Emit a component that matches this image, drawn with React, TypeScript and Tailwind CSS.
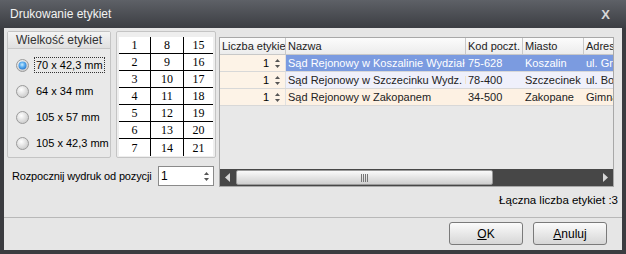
import React from "react";

const F = { fontFamily: '"Liberation Sans", Arial, sans-serif' };

function Radio({ checked }: { checked?: boolean }) {
  return (
    <svg width="13" height="13" viewBox="0 0 13 13" className="shrink-0">
      <defs>
        <radialGradient id="rg1" cx="0.4" cy="0.35" r="0.7">
          <stop offset="0" stopColor="#ffffff" />
          <stop offset="1" stopColor="#c8c8c8" />
        </radialGradient>
        <radialGradient id="rg2" cx="0.45" cy="0.4" r="0.6">
          <stop offset="0" stopColor="#c8ecff" />
          <stop offset="0.5" stopColor="#5fb0f0" />
          <stop offset="1" stopColor="#2a7bd0" />
        </radialGradient>
      </defs>
      <circle cx="6.5" cy="6.5" r="6" fill="url(#rg1)" stroke="#9a9a9a" strokeWidth="1" />
      {checked && <circle cx="6.5" cy="6.5" r="4" fill="url(#rg2)" />}
    </svg>
  );
}

function Spin() {
  return (
    <svg width="7" height="11" viewBox="0 0 7 11" className="shrink-0">
      <path d="M3.5 1 L6 4 L1 4 Z" fill="#555" />
      <path d="M3.5 10 L6 7 L1 7 Z" fill="#555" />
    </svg>
  );
}

const grid = [
  [1, 8, 15],
  [2, 9, 16],
  [3, 10, 17],
  [4, 11, 18],
  [5, 12, 19],
  [6, 13, 20],
  [7, 14, 21],
];

const rows = [
  { sel: true, bg: "bg-[#fdf3e7]", n: "Sąd Rejonowy w Koszalinie Wydział K", k: "75-628", m: "Koszalin", a: "ul. Gro" },
  { sel: false, bg: "bg-[#eff0fb]", n: "Sąd Rejonowy w Szczecinku Wydz. K", k: "78-400", m: "Szczecinek", a: "ul. Bol" },
  { sel: false, bg: "bg-[#fdf1e3]", n: "Sąd Rejonowy w Zakopanem", k: "34-500", m: "Zakopane", a: "Gimna" },
];

export default function App() {
  return (
    <div className="w-[626px] h-[254px] bg-[#3b3c40] flex flex-col overflow-hidden whitespace-nowrap" style={F}>
      <div className="h-[28px] shrink-0 flex items-center justify-between pl-[10px] pr-[16px] bg-gradient-to-b from-[#5e6167] to-[#3c3e43]">
        <span className="text-[12px] text-[#f2f2f2]">Drukowanie etykiet</span>
        <span className="text-[#d8d8d8] text-[13px] font-bold leading-none">X</span>
      </div>
      <div className="h-[222px] mx-[4px] bg-[#e6e6e6] flex flex-col text-[11px] text-black">
        <div className="flex pt-[3px] h-[160px] shrink-0">
          <div className="flex flex-col w-[212px] shrink-0">
            <div className="flex gap-[5px] pl-[3px]">
              <div className="w-[104px] h-[127px] border border-[#c4c4c4] rounded-[2px] bg-[#e9e9e9] flex flex-col">
                <div className="h-[17px] border-b border-[#c8c8c8] bg-gradient-to-b from-[#f4f4f4] to-[#e0e0e0] text-[12px] text-[#333] flex items-center justify-center">
                  Wielkość etykiet
                </div>
                <div className="flex flex-col gap-[10px] pl-[8px] pt-[8px]">
                  {["70 x 42,3 mm", "64 x 34 mm", "105 x 57 mm", "105 x 42,3 mm"].map((t, i) => (
                    <div key={t} className="flex items-center gap-[5px] h-[16px]">
                      <Radio checked={i === 0} />
                      <span className={"text-[11px] " + (i === 0 ? "border border-dotted border-[#333] px-[1px] leading-[14px]" : "px-[2px]")}>{t}</span>
                    </div>
                  ))}
                </div>
              </div>
              <div className="w-[100px] h-[127px] border border-[#c4c4c4] rounded-[2px] bg-[#eeeeee] pt-[5px] px-[2px]">
                <div className="bg-white" style={{ fontFamily: '"Liberation Serif", "Times New Roman", serif' }}>
                  {grid.map((r, i) => (
                    <div key={i} className={"flex h-[17px] " + (i < 6 ? "border-b border-black" : "")}>
                      {r.map((n, j) => (
                        <div
                          key={n}
                          className={
                            "flex items-center justify-center text-[12px] " +
                            (j === 0 ? "w-[32px] border-r border-black" : j === 1 ? "w-[33px] border-r border-black" : "flex-1")
                          }
                        >
                          {n}
                        </div>
                      ))}
                    </div>
                  ))}
                </div>
              </div>
            </div>
            <div className="flex items-center pl-[8px] mt-[8px] gap-[5px]">
              <span className="text-[11px] tracking-[-0.15px] w-[141px]">Rozpocznij wydruk od pozycji</span>
              <div className="w-[56px] h-[20px] border border-[#8a8a8a] bg-white flex items-center justify-between pl-[2px] pr-[3px]">
                <span className="text-[12px]">1</span>
                <Spin />
              </div>
            </div>
          </div>
          <div className="ml-[3px] mt-[6px] w-[395px] h-[150px] border border-[#a8a8a8] bg-[#e8e8e8] flex flex-col">
            <div className="flex-1 overflow-hidden">
              <div className="flex h-[17px] bg-gradient-to-b from-[#fcfcfc] to-[#ececec] border-b border-[#c8c8c8] text-[#222]">
                <div className="w-[66px] shrink-0 border-r border-[#c8c8c8] pl-[2px] overflow-hidden leading-[17px]">Liczba etykiet</div>
                <div className="w-[180px] shrink-0 border-r border-[#c8c8c8] pl-[2px] leading-[17px]">Nazwa</div>
                <div className="w-[57px] shrink-0 border-r border-[#c8c8c8] pl-[2px] leading-[17px] overflow-hidden">Kod poczt.</div>
                <div className="w-[61px] shrink-0 border-r border-[#c8c8c8] pl-[2px] leading-[17px]">Miasto</div>
                <div className="flex-1 pl-[2px] leading-[17px] overflow-hidden">Adres</div>
              </div>
              {rows.map((r, i) => (
                <div key={i} className={"flex h-[17px] border-b border-[#d8d8d8] " + r.bg}>
                  <div className="w-[66px] shrink-0 flex items-center justify-end gap-[5px] pr-[4px] border-r border-[#e0e0e0] bg-[#fdf3e7]">
                    <span>1</span>
                    <Spin />
                  </div>
                  <div className={"flex flex-1 overflow-hidden " + (r.sel ? "bg-[#7b9be0] text-white" : "text-[#222]")}>
                    <div className="w-[180px] shrink-0 pl-[2px] leading-[17px] overflow-hidden">{r.n}</div>
                    <div className="w-[57px] shrink-0 pl-[2px] leading-[17px] overflow-hidden">{r.k}</div>
                    <div className="w-[61px] shrink-0 pl-[2px] leading-[17px] overflow-hidden">{r.m}</div>
                    <div className="flex-1 pl-[2px] leading-[17px] overflow-hidden">{r.a}</div>
                  </div>
                </div>
              ))}
            </div>
            <div className="h-[17px] bg-[#474747] flex items-center">
              <div className="w-[16px] flex items-center justify-center">
                <svg width="6" height="9" viewBox="0 0 6 9"><path d="M5 0 L0 4.5 L5 9 Z" fill="#d8d8d8" /></svg>
              </div>
              <div className="w-[257px] h-[15px] rounded-[2px] bg-gradient-to-b from-[#fafafa] to-[#cfcfcf] border border-[#9a9a9a] flex items-center justify-center">
                <svg width="7" height="8" viewBox="0 0 7 8">
                  <path d="M0.5 0 V8 M2.5 0 V8 M4.5 0 V8 M6.5 0 V8" stroke="#777" strokeWidth="1" />
                </svg>
              </div>
              <div className="flex-1" />
              <div className="w-[16px] flex items-center justify-center">
                <svg width="6" height="9" viewBox="0 0 6 9"><path d="M1 0 L6 4.5 L1 9 Z" fill="#d8d8d8" /></svg>
              </div>
            </div>
          </div>
        </div>
        <div className="flex justify-end pr-[4px] mt-[5px] text-[11.5px] h-[14px] leading-[14px]">Łączna liczba etykiet :3</div>
        <div className="mt-[10px] border-t border-[#b8b8b8]" />
        <div className="flex justify-end gap-[10px] pr-[15px] mt-[4px]">
          <div className="w-[74px] h-[23px] rounded-[3px] border border-[#7a7a7a] bg-gradient-to-b from-[#fbfbfb] to-[#d6d6d6] flex items-center justify-center text-[12px]">
            <span><span className="underline">O</span>K</span>
          </div>
          <div className="w-[74px] h-[23px] rounded-[3px] border border-[#7a7a7a] bg-gradient-to-b from-[#fbfbfb] to-[#d6d6d6] flex items-center justify-center text-[12px]">
            <span><span className="underline">A</span>nuluj</span>
          </div>
        </div>
      </div>
    </div>
  );
}
